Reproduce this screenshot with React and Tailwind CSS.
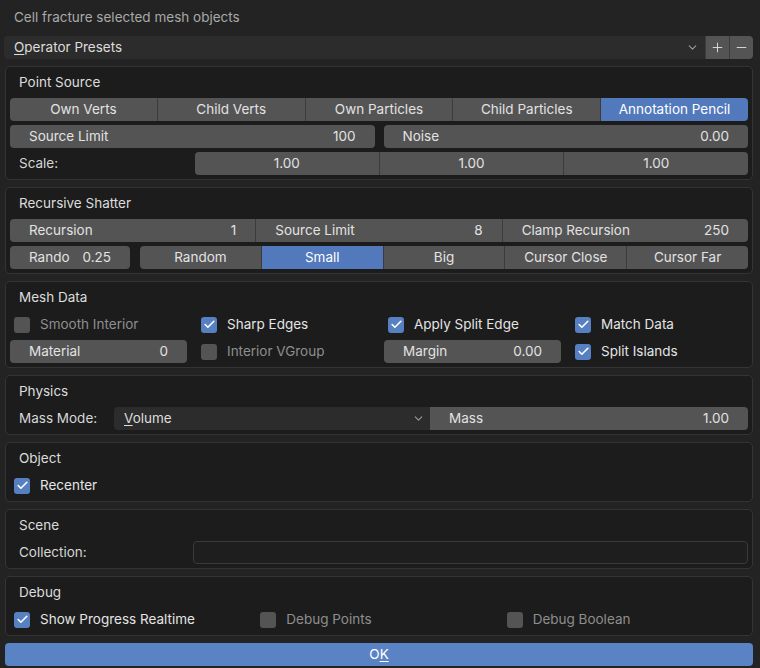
import { ChevronDown, Check, Plus, Minus } from 'lucide-react';

const font = { fontFamily: 'Inter, "Noto Sans", "DejaVu Sans", sans-serif' };

function Seg({ items, active, className = '' }) {
  return (
    <div className={`flex h-[23px] rounded-[4px] overflow-hidden ${className}`}>
      {items.map((it, i) => (
        <div
          key={it}
          className={`flex-1 flex items-center justify-center text-[13.5px] ${i > 0 ? 'border-l border-[#3c3c3c]' : ''} ${
            it === active ? 'bg-[#5179bc] text-white' : 'bg-[#545454] text-[#e2e2e2]'
          }`}
        >
          {it}
        </div>
      ))}
    </div>
  );
}

function NumField({ label, value, className = '' }) {
  return (
    <div className={`flex h-[23px] items-center justify-between rounded-[4px] bg-[#545454] px-[19px] text-[13.5px] text-[#e2e2e2] ${className}`}>
      <span>{label}</span>
      <span>{value}</span>
    </div>
  );
}

function CheckBox({ label, checked }) {
  return (
    <div className="flex h-[23px] items-center pl-[4px]">
      <div className={`flex h-[16px] w-[16px] items-center justify-center rounded-[3px] ${checked ? 'bg-[#5680c2]' : 'bg-[#545454]'}`}>
        {checked && <Check size={13} strokeWidth={3} className="text-white" />}
      </div>
      <span className={`ml-[10px] text-[13.5px] ${checked ? 'text-[#e4e4e4]' : 'text-[#8e8e8e]'}`}>{label}</span>
    </div>
  );
}

function Panel({ title, children }) {
  return (
    <div className="rounded-[5px] border border-[#343434] bg-[#1c1c1c] px-[4px] pb-[4px]">
      <div className="flex h-[31px] items-center pl-[9px] text-[13.5px] text-[#dcdcdc]">{title}</div>
      <div className="flex flex-col gap-[4px]">{children}</div>
    </div>
  );
}

export default function App() {
  return (
    <div style={font} className="h-[668px] w-[760px] overflow-hidden bg-[#232323] pl-[5px] pr-[7px]">
      <div className="flex h-[36px] items-center pb-[2px] pl-[9px] text-[13.5px] text-[#a9a9a9]">
        Cell fracture selected mesh objects
      </div>

      <div className="-ml-px flex h-[23px]">
        <div className="flex flex-1 items-center justify-between rounded-l-[4px] bg-[#2c2c2c] pl-[10px] pr-[6px] text-[13.5px] text-[#dcdcdc]">
          <span>
            <span className="underline underline-offset-2">O</span>perator Presets
          </span>
          <ChevronDown size={13} strokeWidth={2} className="text-[#9a9a9a]" />
        </div>
        <div className="flex w-[24px] items-center justify-center border-l border-[#3c3c3c] bg-[#545454]">
          <Plus size={15} strokeWidth={1.5} className="text-[#dcdcdc]" />
        </div>
        <div className="flex w-[24px] items-center justify-center rounded-r-[4px] border-l border-[#3c3c3c] bg-[#545454]">
          <Minus size={15} strokeWidth={1.5} className="text-[#dcdcdc]" />
        </div>
      </div>

      <div className="mt-[7px] flex flex-col gap-[7px]">
        <Panel title="Point Source">
          <Seg items={['Own Verts', 'Child Verts', 'Own Particles', 'Child Particles', 'Annotation Pencil']} active="Annotation Pencil" />
          <div className="grid grid-cols-2 gap-x-[9px]">
            <NumField label="Source Limit" value="100" />
            <NumField label="Noise" value="0.00" />
          </div>
          <div className="flex">
            <div className="flex w-[185px] items-center pl-[9px] text-[13.5px] text-[#d6d6d6]">Scale:</div>
            <Seg items={['1.00', '1.00 ', '1.00  ']} className="flex-1" />
          </div>
        </Panel>

        <Panel title="Recursive Shatter">
          <div className="flex h-[23px] overflow-hidden rounded-[4px] text-[13.5px] text-[#e2e2e2]">
            {[
              ['Recursion', '1'],
              ['Source Limit', '8'],
              ['Clamp Recursion', '250'],
            ].map(([l, v], i) => (
              <div key={l} className={`flex flex-1 items-center justify-between bg-[#545454] px-[19px] ${i > 0 ? 'border-l border-[#3c3c3c]' : ''}`}>
                <span>{l}</span>
                <span>{v}</span>
              </div>
            ))}
          </div>
          <div className="flex gap-[10px]">
            <NumField label="Rando" value="0.25" className="w-[120px]" />
            <Seg items={['Random', 'Small', 'Big', 'Cursor Close', 'Cursor Far']} active="Small" className="flex-1" />
          </div>
        </Panel>

        <Panel title="Mesh Data">
          <div className="grid grid-cols-4 gap-x-[10px] gap-y-[4px]">
            <CheckBox label="Smooth Interior" />
            <CheckBox label="Sharp Edges" checked />
            <CheckBox label="Apply Split Edge" checked />
            <CheckBox label="Match Data" checked />
            <NumField label="Material" value="0" />
            <CheckBox label="Interior VGroup" />
            <NumField label="Margin" value="0.00" />
            <CheckBox label="Split Islands" checked />
          </div>
        </Panel>

        <Panel title="Physics">
          <div className="flex h-[23px]">
            <div className="flex w-[104px] items-center pl-[9px] text-[13.5px] text-[#d6d6d6]">Mass Mode:</div>
            <div className="flex w-[316px] items-center justify-between rounded-l-[4px] bg-[#2c2c2c] pl-[10px] pr-[5px] text-[13.5px] text-[#dcdcdc]">
              <span>
                <span className="underline underline-offset-2">V</span>olume
              </span>
              <ChevronDown size={13} strokeWidth={2} className="text-[#9a9a9a]" />
            </div>
            <div className="flex flex-1 items-center justify-between rounded-r-[4px] bg-[#545454] px-[19px] text-[13.5px] text-[#e2e2e2]">
              <span>Mass</span>
              <span>1.00</span>
            </div>
          </div>
        </Panel>

        <Panel title="Object">
          <CheckBox label="Recenter" checked />
        </Panel>

        <Panel title="Scene">
          <div className="flex h-[23px]">
            <div className="flex w-[183px] items-center pl-[9px] text-[13.5px] text-[#d6d6d6]">Collection:</div>
            <div className="flex-1 rounded-[4px] border border-[#3a3a3a] bg-[#1e1e1e]" />
          </div>
        </Panel>

        <Panel title="Debug">
          <div className="grid grid-cols-3 gap-x-[1px]">
            <CheckBox label="Show Progress Realtime" checked />
            <CheckBox label="Debug Points" />
            <CheckBox label="Debug Boolean" />
          </div>
        </Panel>
      </div>

      <div className="mt-[7px] flex h-[23px] items-center justify-center rounded-[4px] bg-[#5a83c6] text-[13.5px] text-white">
        <span>
          O<span className="underline underline-offset-2">K</span>
        </span>
      </div>
    </div>
  );
}
